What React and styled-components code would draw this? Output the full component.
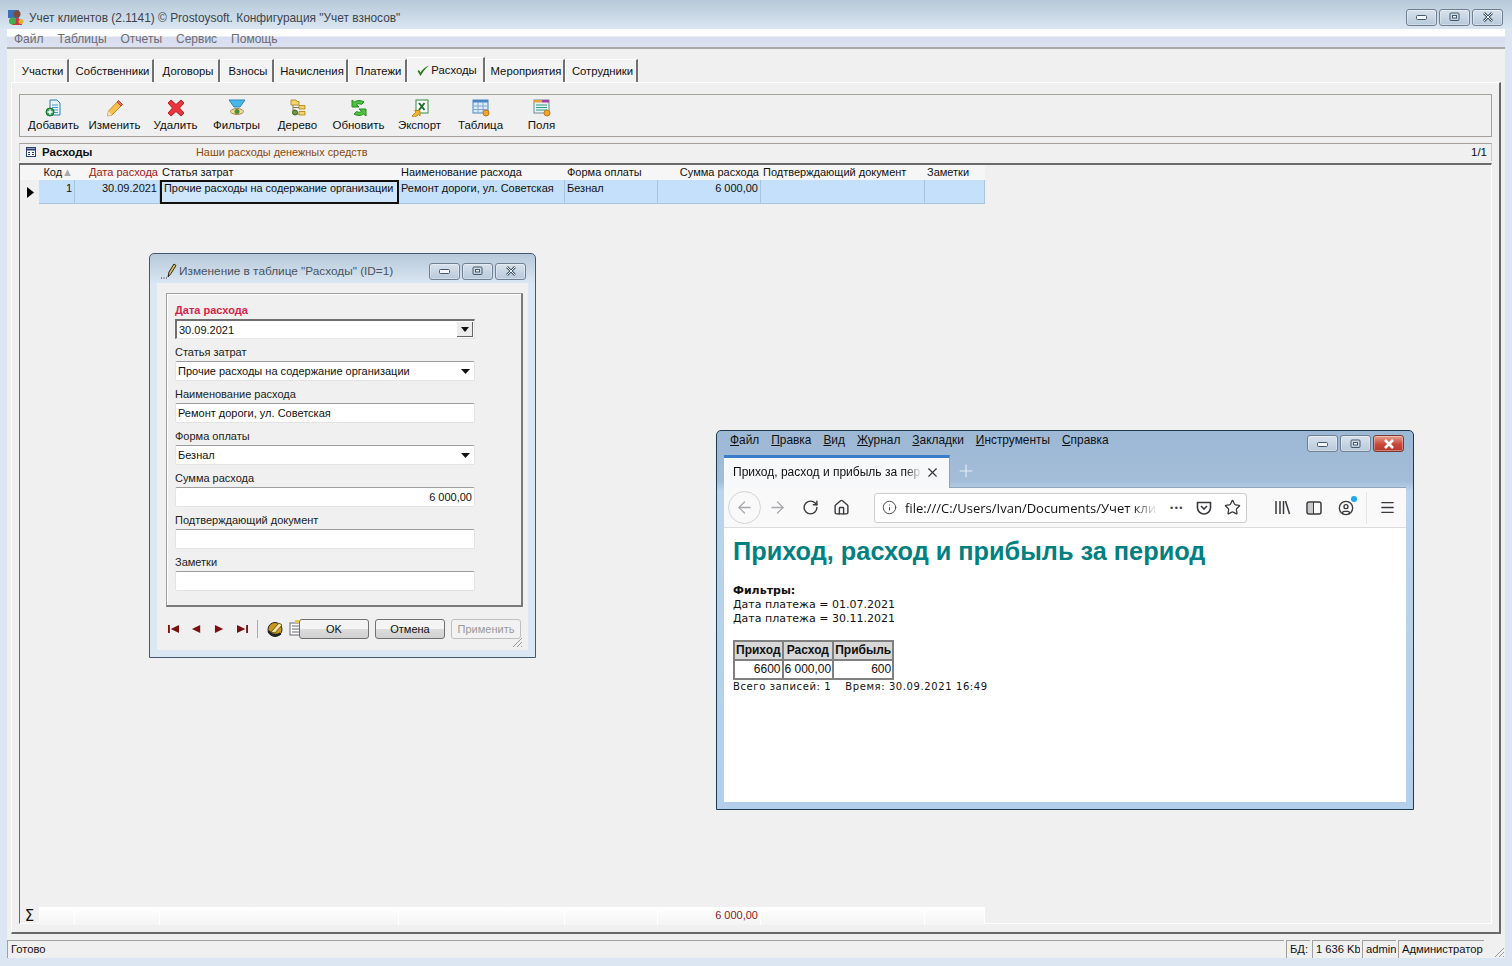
import React from 'react';
import styled, { createGlobalStyle } from 'styled-components';
import { ArrowLeft, ArrowRight, RotateCw, Home, Info, Star, Menu, X, Plus, CircleUser } from 'lucide-react';

const tabs = [
    { name: 'Участки', w: 55 },
    { name: 'Собственники', w: 85 },
    { name: 'Договоры', w: 66 },
    { name: 'Взносы', w: 54 },
    { name: 'Начисления', w: 74 },
    { name: 'Платежи', w: 59 },
    { name: 'Расходы', w: 78, active: true },
    { name: 'Мероприятия', w: 80 },
    { name: 'Сотрудники', w: 73 },
];

const IconAdd = () => (
    <svg width="18" height="18" viewBox="0 0 18 18">
        <path d="M5 1h7l3 3v12H5z" fill="#e8f3fb" stroke="#2f7fb5" />
        <path d="M7 6h6M7 8.500h6M7 11h6M8 13.500h5" stroke="#4b9bcf" />
        <circle cx="5" cy="13" r="4" fill="#3ba35a" stroke="#1d6b35" />
        <path d="M5 10.500v5M2.500 13h5" stroke="#fff" strokeWidth="1.500" />
    </svg>
);

const IconEdit = () => (
    <svg width="18" height="18" viewBox="0 0 18 18">
        <path d="M12.500 1.500l4 4L6 16l-4.500 1 1-5z" fill="#f6c04c" stroke="#c98a2a" />
        <path d="M12.500 1.500l4 4-1.500 1.500-4-4z" fill="#e9705a" stroke="#b8452f" />
        <path d="M2.500 12l-1 5 4.500-1z" fill="#f7dfb9" />
    </svg>
);

const IconDelete = () => (
    <svg width="18" height="18" viewBox="0 0 18 18">
        <path d="M4 1l5 4.500L14 1l3 3-4.500 5 4.500 5-3 3-5-4.500L4 17l-3-3 4.500-5L1 4z" fill="#e8343a" stroke="#b91f24" />
    </svg>
);

const IconFilter = () => (
    <svg width="18" height="18" viewBox="0 0 18 18">
        <path d="M1 1h16l-5 7H6z" fill="#49b5e8" stroke="#2a87bd" />
        <path d="M2 12.500c3-4 11-4 14 0-3 4-11 4-14 0z" fill="#f1dca0" stroke="#a78a3e" />
        <circle cx="9" cy="12.500" r="2.500" fill="#4e8b3a" />
    </svg>
);

const IconTree = () => (
    <svg width="18" height="18" viewBox="0 0 18 18">
        <path d="M2 1h5l1 1.500h2V6H2zM10 6.500h6V10h-6zM10 12.500h6V16h-6z" fill="#f6d56e" stroke="#b98f2c" />
        <path d="M4 6v9h6M4 8.500h6" fill="none" stroke="#8a7a4a" />
        <circle cx="6" cy="13.500" r="2.500" fill="#6a9a3e" stroke="#3e6a22" />
    </svg>
);

const IconRefresh = () => (
    <svg width="18" height="18" viewBox="0 0 18 18">
        <path d="M2 1l2.500 2C7 1 11 1 14 3l-2.500 2.500c-2-1-3.500-1-5 0L9 8H2z" fill="#4cc23f" stroke="#278a22" />
        <path d="M16 17l-2.500-2c-2.500 2-6.500 2-9.500 0l2.500-2.500c2 1 3.500 1 5 0L9 10h7z" fill="#4cc23f" stroke="#278a22" />
    </svg>
);

const IconExport = () => (
    <svg width="18" height="18" viewBox="0 0 18 18">
        <rect x="5" y="1" width="12" height="13" fill="#fff" stroke="#2c8a3c" />
        <path d="M8 4l5.500 7M13.500 4L8 11" stroke="#1a6e2a" strokeWidth="2" />
        <path d="M1 17l4-4-1.500-1.500H9V17l-1.500-1.500-4 3z" fill="#f2b632" stroke="#c2861a" />
    </svg>
);

const IconTable = () => (
    <svg width="18" height="18" viewBox="0 0 18 18">
        <rect x="1" y="1" width="15" height="13" fill="#dcebf8" stroke="#4586c4" />
        <rect x="1" y="1" width="15" height="2.500" fill="#4586c4" />
        <path d="M1 7h15M1 10.500h15M6 3v11M11 3v11" stroke="#7aa8d2" />
        <circle cx="14" cy="14" r="3" fill="#f2a52e" stroke="#c07a14" />
    </svg>
);

const IconFields = () => (
    <svg width="18" height="18" viewBox="0 0 18 18">
        <rect x="1" y="1" width="15" height="13" fill="#e6f3ee" stroke="#6a8a9a" />
        <rect x="1" y="1" width="8" height="2.500" fill="#e8a03a" />
        <rect x="9" y="1" width="7" height="2.500" fill="#a040a8" />
        <path d="M3 6h11M3 8.500h11M3 11h11" stroke="#2f9a8a" />
        <circle cx="14" cy="14" r="3" fill="#f2a52e" stroke="#c07a14" />
    </svg>
);

const tools = [
    { label: 'Добавить', icon: <IconAdd /> },
    { label: 'Изменить', icon: <IconEdit /> },
    { label: 'Удалить', icon: <IconDelete /> },
    { label: 'Фильтры', icon: <IconFilter /> },
    { label: 'Дерево', icon: <IconTree /> },
    { label: 'Обновить', icon: <IconRefresh /> },
    { label: 'Экспорт', icon: <IconExport /> },
    { label: 'Таблица', icon: <IconTable /> },
    { label: 'Поля', icon: <IconFields /> },
];

const MinGlyph = () => (
    <svg width="12" height="8" viewBox="0 0 12 8"><rect x="0.500" y="2.500" width="10" height="4" rx="1" fill="#f4f7fa" stroke="#44586a" /></svg>
);
const MaxGlyph = () => (
    <svg width="12" height="10" viewBox="0 0 12 10"><rect x="1" y="1" width="9" height="7.500" rx="1" fill="none" stroke="#44586a" /><rect x="3.500" y="3.500" width="4" height="2.500" fill="#f4f7fa" stroke="#44586a" /></svg>
);
const CloseGlyph = ({ light }) => (
    <svg width="12" height="10" viewBox="0 0 12 10"><path d="M2 1l8 8M10 1L2 9" stroke={light ? '#fff' : '#44586a'} strokeWidth="2.600" /><path d="M2 1l8 8M10 1L2 9" stroke={light ? '#7a2016' : '#eef3f7'} strokeWidth={light ? '0' : '1'} /></svg>
);

const WinButtons = ({ red }) => (
    <WinControls>
        <WinButton><MinGlyph /></WinButton>
        <WinButton><MaxGlyph /></WinButton>
        <WinButton $red={red}><CloseGlyph light={red} /></WinButton>
    </WinControls>
);

const AppLogo = () => (
    <svg width="17" height="17" viewBox="0 0 17 17">
        <rect x="0" y="1" width="11" height="8" fill="#3f6fb5" />
        <circle cx="9" cy="5" r="3.500" fill="#7a4a3a" />
        <path d="M4 16c0-5 2-7 5-7s5 2 5 7z" fill="#c83a3a" />
        <circle cx="4.500" cy="12" r="3.500" fill="#3fae4e" />
        <circle cx="13" cy="12.500" r="2.500" fill="#e8b030" />
    </svg>
);

const GripIcon = () => (
    <svg width="12" height="12" viewBox="0 0 12 12">
        <path d="M11 2L2 11M11 6l-5 5M11 10l-1 1" stroke="#9a9a9a" fill="none" />
    </svg>
);

const NavIcon = ({ d }) => (
    <svg width="11" height="8" viewBox="0 0 12 10" preserveAspectRatio="none"><path d={d} fill="#7c1010" /></svg>
);

const Field = ({ label, required, value, arrow, focused, right }) => (
    <div>
        <FieldLabel $required={required}>{label}</FieldLabel>
        <FieldBox $focused={focused} $right={right}>
            <span>{value}</span>
            {arrow && (focused
                ? <DropButton><svg width="8" height="5" viewBox="0 0 8 5"><path d="M0 0h8L4 5z" fill="#111" /></svg></DropButton>
                : <svg width="9" height="5" viewBox="0 0 9 5"><path d="M0 0h9L4.500 5z" fill="#111" /></svg>)}
        </FieldBox>
    </div>
);

const App = () => {
    return (
        <Page>
            <GlobalStyle />
            <TitleBar>
                <AppLogo />
                <TitleText>Учет клиентов (2.1141) © Prostoysoft. Конфигурация "Учет взносов"</TitleText>
                <WinButtons />
            </TitleBar>
            <Frame>
                <MenuBar>
                    {['Файл', 'Таблицы', 'Отчеты', 'Сервис', 'Помощь'].map((m) => <span key={m}>{m}</span>)}
                </MenuBar>
                <Client>
                    <Tabs>
                        {tabs.map((t) => (
                            <Tab key={t.name} $w={t.w} $active={t.active}>
                                {t.active && <svg width="12" height="11" viewBox="0 0 12 11"><path d="M0.500 6l1.500-1 1.500 2.500C5.500 4.500 8 2 12 0.500 8.500 3.500 6 6.500 3.500 11z" fill="#2e7d1a" /></svg>}
                                {t.name}
                            </Tab>
                        ))}
                    </Tabs>
                    <TabPanel>
                        <Toolbar>
                            {tools.map((t) => (
                                <ToolButton key={t.label}>
                                    {t.icon}
                                    <span>{t.label}</span>
                                </ToolButton>
                            ))}
                        </Toolbar>
                        <SectionHeader>
                            <svg width="10" height="10" viewBox="0 0 10 10"><rect x="0.500" y="0.500" width="9" height="9" fill="#fff" stroke="#2b3f73" /><path d="M0 2.500h10" stroke="#2b3f73" strokeWidth="2" /><path d="M2 5.500h2M6 5.500h2M2 7.500h2M6 7.500h2" stroke="#2b3f73" /></svg>
                            <SectionTitle>Расходы</SectionTitle>
                            <SectionHint>Наши расходы денежных средств</SectionHint>
                            <SectionCount>1/1</SectionCount>
                        </SectionHeader>
                        <Grid>
                            <GridRow $head>
                                <HeadCell />
                                <HeadCell $right>Код<SortMark>▲</SortMark></HeadCell>
                                <HeadCell $red $right>Дата расхода</HeadCell>
                                <HeadCell>Статья затрат</HeadCell>
                                <HeadCell>Наименование расхода</HeadCell>
                                <HeadCell>Форма оплаты</HeadCell>
                                <HeadCell $right>Сумма расхода</HeadCell>
                                <HeadCell>Подтверждающий документ</HeadCell>
                                <HeadCell>Заметки</HeadCell>
                            </GridRow>
                            <GridRow>
                                <Indicator><svg width="7" height="11" viewBox="0 0 7 11"><path d="M0 0l7 5.500-7 5.500z" fill="#000" /></svg></Indicator>
                                <DataCell $right>1</DataCell>
                                <DataCell $right>30.09.2021</DataCell>
                                <DataCell $selected>Прочие расходы на содержание организации</DataCell>
                                <DataCell>Ремонт дороги, ул. Советская</DataCell>
                                <DataCell>Безнал</DataCell>
                                <DataCell $right>6 000,00</DataCell>
                                <DataCell />
                                <DataCell />
                            </GridRow>
                            <GridFill />
                            <GridRow $sum>
                                <SumMark>Σ</SumMark>
                                <SumCell />
                                <SumCell />
                                <SumCell />
                                <SumCell />
                                <SumCell />
                                <SumCell $value>6 000,00</SumCell>
                                <SumCell />
                                <SumCell />
                            </GridRow>
                        </Grid>
                    </TabPanel>
                </Client>
                <StatusBar>
                    <StatusMain>Готово</StatusMain>
                    <StatusCell $w={24}>БД:</StatusCell>
                    <StatusCell $w={48}>1 636 Kb</StatusCell>
                    <StatusCell $w={34}>admin</StatusCell>
                    <StatusCell $w={86}>Администратор</StatusCell>
                    <StatusGrip><GripIcon /></StatusGrip>
                </StatusBar>
            </Frame>

            <Dialog>
                <DialogTitle>
                    <svg width="18" height="16" viewBox="0 0 18 16"><path d="M7 14l1-5 5-8 2 1.500-5 8z" fill="#e8c64a" stroke="#222" /><path d="M0 15h1M2.500 15h1M5 15h1" stroke="#222" /></svg>
                    <DialogTitleText>Изменение в таблице "Расходы" (ID=1)</DialogTitleText>
                    <WinButtons />
                </DialogTitle>
                <DialogClient>
                    <GroupBox>
                        <Field label="Дата расхода" required value="30.09.2021" arrow focused />
                        <Field label="Статья затрат" value="Прочие расходы на содержание организации" arrow />
                        <Field label="Наименование расхода" value="Ремонт дороги, ул. Советская" />
                        <Field label="Форма оплаты" value="Безнал" arrow />
                        <Field label="Сумма расхода" value="6 000,00" right />
                        <Field label="Подтверждающий документ" />
                        <Field label="Заметки" />
                    </GroupBox>
                    <DialogFooter>
                        <NavGroup>
                            <NavIcon d="M0 0h2v10H0zM12 0v10L3 5z" />
                            <NavIcon d="M10 0v10L1 5z" />
                            <NavIcon d="M1 0v10l9-5z" />
                            <NavIcon d="M0 0v10l9-5zM10 0h2v10h-2z" />
                            <NavDivider />
                            <svg width="16" height="16" viewBox="0 0 16 16"><circle cx="8" cy="8.500" r="7" fill="#c8981e" stroke="#222" /><path d="M4 11l8-9 3 2-7 8z" fill="#f4e2a0" stroke="#6a5a1a" /><path d="M1.500 10c2 4 8 5.500 12 2.500" stroke="#222" strokeWidth="2.500" fill="none" /></svg>
                            <NavDoc><svg width="14" height="16" viewBox="0 0 14 16"><rect x="1" y="3" width="12" height="12" fill="#fff" stroke="#667" /><path d="M3 6h8M3 9h8M3 12h8" stroke="#667" /><path d="M6 0h6v3H6z" fill="#e8c64a" /></svg></NavDoc>
                        </NavGroup>
                        <DialogButton>OK</DialogButton>
                        <DialogButton>Отмена</DialogButton>
                        <DialogButton $disabled>Применить</DialogButton>
                        <DialogGrip><GripIcon /></DialogGrip>
                    </DialogFooter>
                </DialogClient>
            </Dialog>

            <Browser>
                <BrowserTop>
                    <BrowserMenu>
                        <span><u>Ф</u>айл</span>
                        <span><u>П</u>равка</span>
                        <span><u>В</u>ид</span>
                        <span><u>Ж</u>урнал</span>
                        <span><u>З</u>акладки</span>
                        <span><u>И</u>нструменты</span>
                        <span><u>С</u>правка</span>
                    </BrowserMenu>
                    <WinButtons red />
                </BrowserTop>
                <BrowserTabs>
                    <BrowserTab>
                        <TabCaption>Приход, расход и прибыль за пер</TabCaption>
                        <X size={15} strokeWidth={1.8} color="#333" />
                    </BrowserTab>
                    <NewTab><Plus size={20} strokeWidth={1.4} color="#e4edf6" /></NewTab>
                </BrowserTabs>
                <BrowserBar>
                    <BackButton><ArrowLeft size={19} strokeWidth={1.6} color="#a9a9ad" /></BackButton>
                    <BarIcon $w={33}><ArrowRight size={19} strokeWidth={1.6} color="#a9a9ad" /></BarIcon>
                    <BarIcon $w={33}><RotateCw size={17} strokeWidth={2} color="#3a3a3e" /></BarIcon>
                    <BarIcon $w={29}><Home size={17} strokeWidth={2} color="#3a3a3e" /></BarIcon>
                    <UrlBox>
                        <Info size={15} strokeWidth={1.5} color="#444" />
                        <UrlText>file:///C:/Users/Ivan/Documents/Учет кли</UrlText>
                        <UrlDots>•••</UrlDots>
                        <svg width="16" height="16" viewBox="0 0 16 16"><path d="M1.500 2.500h13v5a6.500 6.500 0 0 1-13 0z" fill="none" stroke="#3a3a3e" strokeWidth="1.600" /><path d="M5 6l3 3 3-3" fill="none" stroke="#3a3a3e" strokeWidth="1.600" /></svg>
                        <Star size={17} strokeWidth={1.8} color="#3a3a3e" />
                    </UrlBox>
                    <BarSide>
                        <BarIcon $w={32}><svg width="17" height="15" viewBox="0 0 17 15"><path d="M2 1v13M6 1v13M9.500 1v13M11.500 1l4 13" stroke="#3a3a3e" strokeWidth="1.500" fill="none" /></svg></BarIcon>
                        <BarIcon $w={32}><svg width="16" height="14" viewBox="0 0 16 14"><rect x="1" y="1" width="14" height="12" rx="2" fill="none" stroke="#3a3a3e" strokeWidth="1.500" /><rect x="2" y="2" width="5" height="10" fill="#c9c9cc" /><path d="M7.500 1v12" stroke="#3a3a3e" /></svg></BarIcon>
                        <AccountIcon>
                            <CircleUser size={16} strokeWidth={2} color="#3a3a3e" />
                            <AccountDot />
                        </AccountIcon>
                        <BarDivider />
                        <BarIcon $w={41}><Menu size={17} strokeWidth={1.8} color="#3a3a3e" /></BarIcon>
                    </BarSide>
                </BrowserBar>
                <BrowserPage>
                    <PageHeading>Приход, расход и прибыль за период</PageHeading>
                    <Filters>
                        <b>Фильтры:</b>
                        <div>Дата платежа = 01.07.2021</div>
                        <div>Дата платежа = 30.11.2021</div>
                    </Filters>
                    <ReportTable>
                        <thead>
                            <tr><th>Приход</th><th>Расход</th><th>Прибыль</th></tr>
                        </thead>
                        <tbody>
                            <tr><td>6600</td><td>6 000,00</td><td>600</td></tr>
                        </tbody>
                    </ReportTable>
                    <ReportFooter>
                        <span>Всего записей: 1</span>
                        <span>Время: 30.09.2021 16:49</span>
                    </ReportFooter>
                </BrowserPage>
            </Browser>
        </Page>
    );
};

const GlobalStyle = createGlobalStyle`
    html, body {
        margin: 0;
        padding: 0;
        background: #dbe6f2;
    }
    * {
        box-sizing: border-box;
    }
    body {
        font-family: "Liberation Sans", Arial, sans-serif;
        font-size: 11px;
        color: #111;
    }
`;

const Page = styled.div`
    position: relative;
    width: 1512px;
    height: 966px;
    display: flex;
    flex-direction: column;
    overflow: hidden;
    background: #dbe6f2;
`;

const TitleBar = styled.div`
    height: 29px;
    flex: none;
    display: flex;
    align-items: center;
    padding: 5px 9px 0 8px;
    background: linear-gradient(#b7c9d9, #dae6f2);
`;

const TitleText = styled.div`
    margin: 2px 0 0 4px;
    flex: 1;
    font-size: 11.900px;
    color: #3d444c;
`;

const WinControls = styled.div`
    display: flex;
    gap: 2px;
    flex: none;
`;

const WinButton = styled.div`
    width: 31px;
    height: 17px;
    display: flex;
    align-items: center;
    justify-content: center;
    border: 1px solid ${(p) => (p.$red ? '#7d3a30' : '#6f8093')};
    border-radius: 3px;
    background: ${(p) => (p.$red ? 'linear-gradient(#e8a090, #c8493a 55%, #b5382a)' : 'linear-gradient(#d8e2ec, #b8c9da)')};
    box-shadow: inset 0 0 0 1px rgba(255, 255, 255, 0.35);
`;

const Frame = styled.div`
    flex: 1;
    display: flex;
    flex-direction: column;
    min-height: 0;
    padding: 0 7px 8px;
`;

const MenuBar = styled.div`
    height: 20px;
    flex: none;
    display: flex;
    align-items: center;
    gap: 14px;
    padding: 2px 0 0 7px;
    font-size: 12px;
    color: #6c6c72;
    background: linear-gradient(#fff 0, #fff 7px, #d7ddef 8px, #dde2f2 18px);
    border-bottom: 2px solid #a9a9a9;
`;

const Client = styled.div`
    flex: 1;
    min-height: 0;
    display: flex;
    flex-direction: column;
    padding: 9px 4px 6px;
    background: #f0f0f0;
`;

const Tabs = styled.div`
    height: 24px;
    flex: none;
    display: flex;
    align-items: flex-end;
    padding-left: 3px;
`;

const Tab = styled.div`
    width: ${(p) => p.$w}px;
    height: ${(p) => (p.$active ? 25 : 23)}px;
    display: flex;
    align-items: center;
    justify-content: center;
    gap: 2px;
    padding-left: 3px;
    font-size: 11.300px;
    background: #f3f3f3;
    border-top: 1px solid #fff;
    border-left: 1px solid #fff;
    border-right: 2px solid #707070;
    position: relative;
    z-index: ${(p) => (p.$active ? 1 : 0)};
`;

const TabPanel = styled.div`
    flex: 1;
    min-height: 0;
    display: flex;
    flex-direction: column;
    padding: 11px 7px 8px 7px;
    border-top: 1px solid #fff;
    border-left: 1px solid #fff;
    border-right: 2px solid #696969;
    border-bottom: 2px solid #696969;
`;

const Toolbar = styled.div`
    height: 43px;
    flex: none;
    display: flex;
    padding: 4px 0 0 3px;
    border: 1px solid #a5a29c;
`;

const ToolButton = styled.div`
    width: 61px;
    display: flex;
    flex-direction: column;
    align-items: center;
    gap: 2px;
    font-size: 11.500px;
    white-space: nowrap;
`;

const SectionHeader = styled.div`
    height: 18px;
    flex: none;
    margin-top: 6px;
    display: flex;
    align-items: center;
    padding: 0 4px 2px 6px;
    border-top: 1px solid #a5a29c;
    border-left: 1px solid #c8c8c8;
    border-right: 1px solid #c8c8c8;
`;

const SectionTitle = styled.b`
    width: 154px;
    margin-left: 6px;
    font-size: 11.500px;
`;

const SectionHint = styled.span`
    color: #8a4a10;
    flex: 1;
    font-size: 10.900px;
`;

const SectionCount = styled.span`
    font-size: 11.500px;
`;

const Grid = styled.div`
    flex: 1;
    min-height: 0;
    margin-top: 2px;
    display: flex;
    flex-direction: column;
    border-top: 2px solid #6a6a6a;
    border-left: 1px solid #6a6a6a;
    border-right: 1px solid #fff;
    border-bottom: 1px solid #fff;
`;

const GridRow = styled.div`
    flex: none;
    width: 965px;
    height: ${(p) => (p.$head ? 15 : p.$sum ? 16 : 24)}px;
    display: grid;
    grid-template-columns: 19px 36px 85px 239px 166px 93px 103px 164px 60px;
`;

const HeadCell = styled.div`
    display: flex;
    align-items: center;
    justify-content: ${(p) => (p.$right ? 'flex-end' : 'flex-start')};
    padding: 0 2px 2px;
    white-space: nowrap;
    font-size: 11px;
    color: ${(p) => (p.$red ? '#a01818' : '#111')};
    background: #f6f6f6;
`;

const SortMark = styled.span`
    font-size: 11px;
    color: #a8a8a8;
    margin-left: 0;
`;

const Indicator = styled.div`
    display: flex;
    align-items: center;
    justify-content: center;
    padding-left: 2px;
`;

const DataCell = styled.div`
    padding: ${(p) => (p.$selected ? '0 2px' : '2px 2px')};
    text-align: ${(p) => (p.$right ? 'right' : 'left')};
    white-space: nowrap;
    overflow: hidden;
    font-size: ${(p) => (p.$selected ? '10.900px' : '11px')};
    line-height: 12px;
    background: #c5e0fa;
    border-right: 1px solid #a9c5de;
    border-bottom: 1px solid #a9c5de;
    ${(p) => p.$selected && 'border: 2px solid #111; background: #cfe6fb;'}
`;

const GridFill = styled.div`
    flex: 1;
`;

const SumMark = styled.div`
    display: flex;
    align-items: center;
    justify-content: center;
    font-size: 15px;
    font-family: "DejaVu Sans", sans-serif;
`;

const SumCell = styled.div`
    padding: 0 2px;
    line-height: 16px;
    text-align: right;
    color: #8a1a1a;
    background: linear-gradient(#fff, #f4f4f4);
    border-right: 1px solid #fff;
`;

const StatusBar = styled.div`
    height: 18px;
    flex: none;
    display: flex;
    gap: 2px;
    background: #f0f0f0;
    font-size: 11.200px;
`;

const StatusMain = styled.div`
    flex: 1;
    padding: 2px 3px;
    border-top: 1px solid #a0a0a0;
    border-left: 1px solid #a0a0a0;
`;

const StatusCell = styled.div`
    width: ${(p) => p.$w}px;
    flex: none;
    padding: 2px 3px;
    white-space: nowrap;
    overflow: hidden;
    border-top: 1px solid #a0a0a0;
    border-left: 1px solid #a0a0a0;
`;

const StatusGrip = styled.div`
    width: 19px;
    flex: none;
    display: flex;
    align-items: flex-end;
    justify-content: flex-end;
`;

const Dialog = styled.div`
    position: absolute;
    left: 149px;
    top: 253px;
    width: 387px;
    height: 405px;
    display: flex;
    flex-direction: column;
    padding: 0 7px 7px;
    border: 1px solid #3f5a72;
    border-radius: 5px 5px 0 0;
    background: linear-gradient(#b7c9d9, #dbe7f3 30px);
`;

const DialogTitle = styled.div`
    height: 29px;
    flex: none;
    display: flex;
    align-items: center;
    padding: 5px 2px 0 4px;
`;

const DialogTitleText = styled.div`
    flex: 1;
    font-size: 11.800px;
    color: #4a5460;
`;

const DialogClient = styled.div`
    flex: 1;
    min-height: 0;
    display: flex;
    flex-direction: column;
    padding: 10px 5px 0 9px;
    background: #f0f0f0;
`;

const GroupBox = styled.div`
    height: 314px;
    flex: none;
    padding: 3px 0 0 8px;
    border: 1px solid #a0a0a0;
    border-right: 2px solid #7a7a7a;
    border-bottom: 2px solid #7a7a7a;
    box-shadow: inset 1px 1px 0 #fff;
`;

const FieldLabel = styled.div`
    height: 22px;
    display: flex;
    align-items: flex-end;
    padding-bottom: 2px;
    font-size: 11px;
    line-height: 13px;
    color: ${(p) => (p.$required ? '#d81e4a' : '#222')};
    font-weight: ${(p) => (p.$required ? 700 : 400)};
`;

const FieldBox = styled.div`
    width: 300px;
    height: 20px;
    display: flex;
    align-items: center;
    justify-content: ${(p) => (p.$right ? 'flex-end' : 'space-between')};
    padding: 0 ${(p) => (p.$focused ? 1 : 2)}px 0 2px;
    padding-right: ${(p) => (p.$focused ? '1px' : p.$right ? '2px' : '4px')};
    font-size: 11px;
    background: #fff;
    border-radius: 2px;
    border: 1px solid #e3e3e3;
    border-top: 1px solid #9e9e9e;
    ${(p) => p.$focused && 'border: 1px solid #e8e8e8; border-top: 2px solid #707070; border-left: 2px solid #707070; border-radius: 0;'}
`;

const DropButton = styled.div`
    width: 16px;
    height: 15px;
    display: flex;
    align-items: center;
    justify-content: center;
    background: #ececec;
    border-right: 1px solid #666;
    border-bottom: 1px solid #666;
`;

const DialogFooter = styled.div`
    position: relative;
    flex: 1;
    display: flex;
    align-items: flex-start;
    padding: 12px 2px 0 0;
`;

const NavGroup = styled.div`
    flex: 1;
    min-width: 0;
    height: 20px;
    display: flex;
    align-items: center;
    overflow: hidden;
    gap: 12px;
    padding-left: 2px;
    svg {
        flex: none;
    }
`;

const NavDivider = styled.div`
    width: 1px;
    height: 18px;
    flex: none;
    margin: 0 -3px 0 -3px;
    background: #aaa;
`;

const NavDoc = styled.div`
    flex: none;
    margin-left: -6px;
`;

const DialogButton = styled.div`
    width: 70px;
    height: 20px;
    flex: none;
    display: flex;
    align-items: center;
    justify-content: center;
    font-size: 11px;
    color: ${(p) => (p.$disabled ? '#9a9a9a' : '#111')};
    border: 1px solid ${(p) => (p.$disabled ? '#c0c0c0' : '#707070')};
    border-radius: 3px;
    background: ${(p) => (p.$disabled ? '#f2f2f2' : 'linear-gradient(#f4f4f4 50%, #dcdcdc 52%, #d0d0d0)')};
    & + & {
        margin-left: 6px;
    }
`;

const DialogGrip = styled.div`
    position: absolute;
    right: 0;
    bottom: 0;
`;

const Browser = styled.div`
    position: absolute;
    left: 716px;
    top: 430px;
    width: 698px;
    height: 380px;
    display: flex;
    flex-direction: column;
    padding: 0 7px 7px;
    border: 1px solid #1d3b50;
    border-radius: 5px 5px 0 0;
    background: linear-gradient(#9db8d5, #a3bdd8 50px, #bcd4ec 60px, #b3cfea);
`;

const BrowserTop = styled.div`
    height: 24px;
    flex: none;
    display: flex;
    align-items: flex-start;
    justify-content: space-between;
    padding: 4px 2px 0 6px;
`;

const BrowserMenu = styled.div`
    display: flex;
    gap: 12px;
    font-size: 11.900px;
    color: #111;
    margin-top: -2px;
`;

const BrowserTabs = styled.div`
    height: 33px;
    flex: none;
    display: flex;
    border-bottom: 1px solid #8fa4b8;
`;

const BrowserTab = styled.div`
    width: 226px;
    display: flex;
    align-items: center;
    padding: 0 5px 2px 9px;
    background: #f7f8fa;
    border-top: 3px solid #3a7dc8;
    border-right: 1px solid #8fa4b8;
    margin-bottom: -1px;
`;

const TabCaption = styled.div`
    width: 189px;
    margin-right: 3px;
    font-size: 12px;
    white-space: nowrap;
    mask-image: linear-gradient(90deg, #000 172px, transparent);
`;

const NewTab = styled.div`
    width: 31px;
    display: flex;
    align-items: center;
    justify-content: center;
`;

const BrowserBar = styled.div`
    height: 40px;
    flex: none;
    display: flex;
    align-items: center;
    padding-left: 4px;
    background: #f9f9fa;
    border-bottom: 1px solid #dcdcde;
`;

const BackButton = styled.div`
    width: 33px;
    height: 33px;
    flex: none;
    display: flex;
    align-items: center;
    justify-content: center;
    border: 1px solid #d4d4d6;
    border-radius: 50%;
`;

const BarIcon = styled.div`
    width: ${(p) => p.$w}px;
    flex: none;
    display: flex;
    align-items: center;
    justify-content: center;
`;

const UrlBox = styled.div`
    width: 373px;
    height: 30px;
    flex: none;
    margin-left: 18px;
    display: flex;
    align-items: center;
    gap: 12px;
    padding: 0 5px 0 7px;
    background: #fff;
    border: 1px solid #ccc;
    border-radius: 3px;
`;

const UrlText = styled.div`
    flex: 1;
    min-width: 0;
    margin-left: -4px;
    font-family: "Open Sans", "Liberation Sans", sans-serif;
    font-size: 13px;
    white-space: nowrap;
    mask-image: linear-gradient(90deg, #000 90%, transparent);
`;

const UrlDots = styled.span`
    font-size: 9px;
    color: #444;
    letter-spacing: 1.500px;
`;

const BarSide = styled.div`
    display: flex;
    align-items: center;
    padding-left: 19px;
`;

const AccountIcon = styled.div`
    position: relative;
    width: 32px;
    display: flex;
    justify-content: center;
`;

const AccountDot = styled.span`
    position: absolute;
    top: -4px;
    right: 5px;
    width: 6px;
    height: 6px;
    border-radius: 50%;
    background: #1fa8e8;
`;

const BarDivider = styled.div`
    width: 1px;
    height: 32px;
    margin-left: 4px;
    background: #e4e4e6;
`;

const BrowserPage = styled.div`
    flex: 1;
    min-height: 0;
    padding: 9px 0 0 9px;
    background: #fff;
    font-family: "DejaVu Sans", Verdana, sans-serif;
    font-size: 11px;
    color: #111;
`;

const PageHeading = styled.h1`
    margin: 0;
    font-family: "Liberation Sans", Arial, sans-serif;
    font-size: 25.300px;
    line-height: 28px;
    font-weight: 700;
    color: #008080;
`;

const Filters = styled.div`
    margin-top: 19px;
    line-height: 14px;
    b {
        display: block;
    }
`;

const ReportTable = styled.table`
    margin-top: 14px;
    border-collapse: collapse;
    font-family: "Liberation Sans", Arial, sans-serif;
    font-size: 12px;
    th, td {
        border: 2px solid #808080;
        padding: 0 1px 2px;
        height: 19px;
    }
    th {
        background: #d8d8d8;
    }
    td {
        text-align: right;
    }
`;

const ReportFooter = styled.div`
    display: flex;
    gap: 14px;
    margin-top: 1px;
    font-size: 10px;
    letter-spacing: 0.600px;
    line-height: 12px;
`;

export default App;
